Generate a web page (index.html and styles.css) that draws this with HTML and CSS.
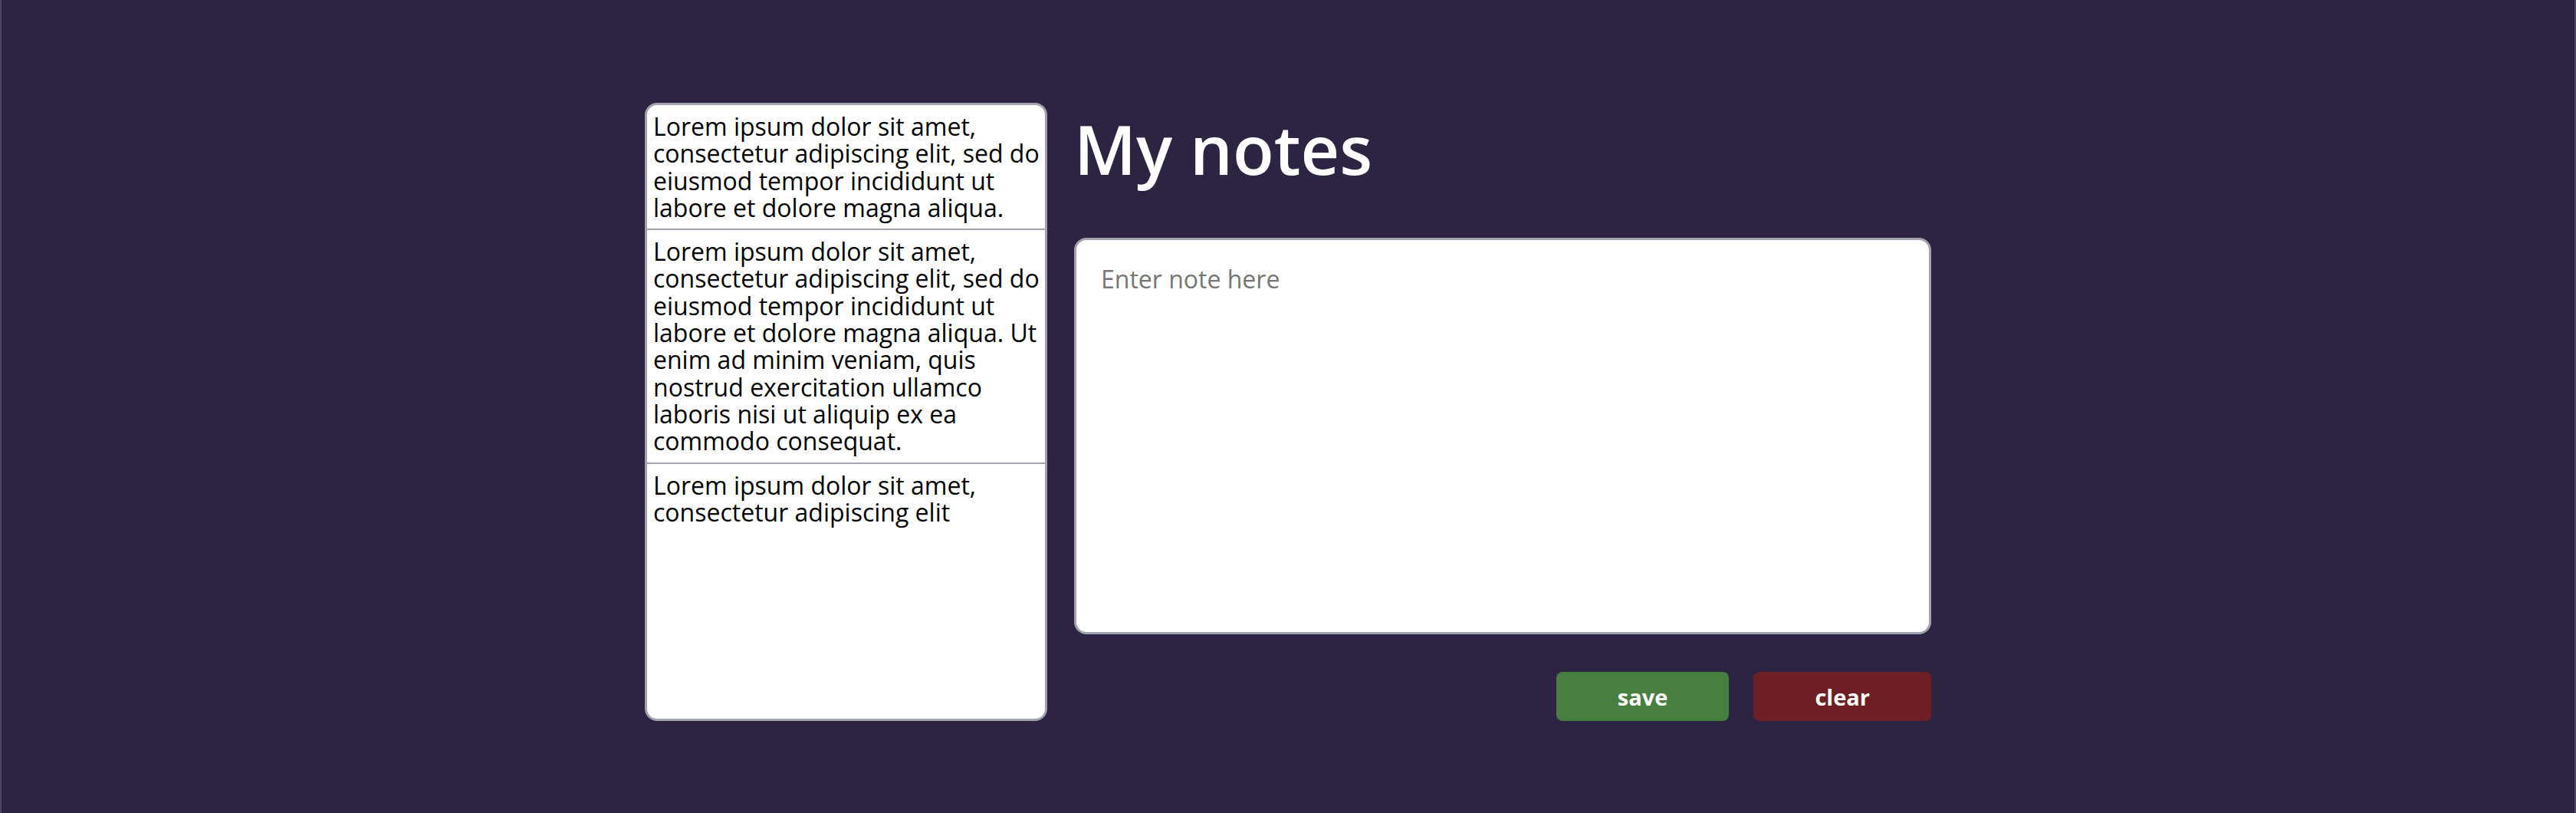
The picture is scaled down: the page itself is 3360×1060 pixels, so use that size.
FILE: index.html
```html
<!DOCTYPE html>
<html lang="en">
<head>
<meta charset="utf-8">
<title>My notes</title>
<link rel="stylesheet" href="styles.css">
</head>
<body>
<div class="page">
  <ul class="note-list">
    <li class="note">Lorem ipsum dolor sit amet, consectetur adipiscing elit, sed do eiusmod tempor incididunt ut labore et dolore magna aliqua.</li>
    <li class="note">Lorem ipsum dolor sit amet, consectetur adipiscing elit, sed do eiusmod tempor incididunt ut labore et dolore magna aliqua. Ut enim ad minim veniam, quis nostrud exercitation ullamco laboris nisi ut aliquip ex ea commodo consequat.</li>
    <li class="note">Lorem ipsum dolor sit amet, consectetur adipiscing elit</li>
  </ul>
  <main class="editor">
    <h1 class="title">My notes</h1>
    <textarea class="note-input" placeholder="Enter note here"></textarea>
    <div class="actions">
      <button class="btn btn-save">save</button>
      <button class="btn btn-clear">clear</button>
    </div>
  </main>
</div>
</body>
</html>
```
FILE: styles.css
```css
html, body {
  margin: 0;
  padding: 0;
}
body {
  background: #2c2442;
  min-height: 100vh;
  box-sizing: border-box;
  border-left: 2px solid #4b4563;
  border-right: 2px solid #4b4563;
  font-family: "Open Sans", "Noto Sans", sans-serif;
}
.page {
  display: flex;
  justify-content: center;
  align-items: stretch;
  gap: 35px;
  padding-top: 134px;
}
.note-list {
  list-style: none;
  margin: 0;
  padding: 0;
  width: 525px;
  box-sizing: border-box;
  background: #fff;
  border: 3px solid #a0a2ad;
  border-radius: 16px;
  overflow: hidden;
}
.note {
  padding: 10px 6px 10px 8px;
  font-family: "Open Sans", "Noto Sans", sans-serif;
  font-size: 32px;
  line-height: 35.3px;
  color: #000;
  border-bottom: 2px solid #a0a2ad;
}
.note:last-child {
  border-bottom: none;
}
.editor {
  width: 1118px;
  display: flex;
  flex-direction: column;
}
.title {
  margin: 0;
  color: #fff;
  font-size: 88px;
  font-weight: 600;
  line-height: 120px;
  height: 124px;
}
.note-input {
  margin-top: 52px;
  height: 517px;
  box-sizing: border-box;
  border: 3px solid #a0a2ad;
  border-radius: 16px;
  padding: 29px 32px;
  font-family: "Open Sans", "Noto Sans", sans-serif;
  font-size: 32px;
  resize: none;
  outline: none;
}
.note-input::placeholder {
  color: #767676;
}
.actions {
  display: flex;
  justify-content: flex-end;
  gap: 32px;
  margin-top: 49px;
}
.btn {
  height: 64px;
  padding: 0 80px;
  border: none;
  border-radius: 8px;
  color: #fff;
  font-family: "Open Sans", "Noto Sans", sans-serif;
  font-size: 29px;
  font-weight: 700;
}
.btn-save {
  background: #477f41;
}
.btn-clear {
  background: #6e1f25;
}
```
